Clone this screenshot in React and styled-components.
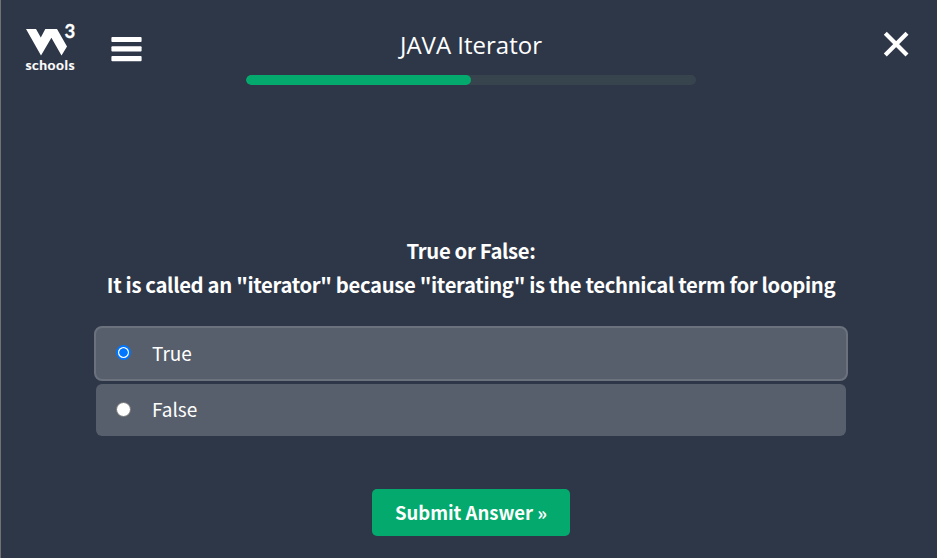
import React, { useState } from "react";
import styled, { createGlobalStyle } from "styled-components";

const GlobalStyle = createGlobalStyle`
  *, *::before, *::after { box-sizing: border-box; }
  body { margin: 0; background: #2e3748; overflow: hidden; }
`;

const Page = styled.div`
  height: 558px;
  border-left: 1px solid #73726f;
  background: #2e3748;
  color: #fff;
  font-family: "Noto Sans CJK SC", "Open Sans", sans-serif;
  display: flex;
  flex-direction: column;
`;

const Header = styled.header`
  height: 90px;
  flex: none;
  display: grid;
  grid-template-columns: 245px 450px 1fr;
`;

const Left = styled.div`
  display: flex;
  align-items: flex-start;
  padding: 20px 0 0 20px;
`;

const Logo = styled.svg`
  display: block;
  flex: none;
  font-family: "Lato", sans-serif;
  font-weight: 700;
  fill: #fff;
`;

const IconButton = styled.button`
  border: 0;
  padding: 0;
  background: none;
  color: #fff;
  cursor: pointer;
  line-height: 0;
  margin: ${(p) => p.$margin};
`;

const Center = styled.div`
  display: flex;
  flex-direction: column;
  align-items: center;
  padding-top: 29px;
`;

const Title = styled.h1`
  margin: 0;
  height: 46px;
  font: 400 24px/32px "Open Sans", sans-serif;
  white-space: nowrap;
`;

const Track = styled.div`
  width: 450px;
  height: 10px;
  border-radius: 5px;
  background: #38444d;
  overflow: hidden;
`;

const Fill = styled.div`
  height: 100%;
  border-radius: 5px;
  background: #04aa6d;
`;

const Right = styled.div`
  display: flex;
  justify-content: flex-end;
  align-items: flex-start;
`;

const Quiz = styled.form`
  width: 754px;
  margin: 143px 0 0 93px;
  display: flex;
  flex-direction: column;
  align-items: center;
`;

const Question = styled.p`
  margin: 0;
  height: 93px;
  text-align: center;
  font-size: 20.3px;
  font-weight: 700;
  line-height: 34px;
  letter-spacing: -0.345px;
  white-space: nowrap;
`;

const Option = styled.label`
  display: flex;
  align-items: center;
  width: ${(p) => (p.$checked ? 754 : 750)}px;
  height: ${(p) => (p.$checked ? 55 : 52)}px;
  margin-bottom: ${(p) => (p.$checked ? 3 : 0)}px;
  padding: 0 20px 2px;
  border: ${(p) => (p.$checked ? "2px solid #6b727e" : "0")};
  border-radius: ${(p) => (p.$checked ? 8 : 6)}px;
  background: #585f6c;
  font-size: 19px;
  line-height: 28px;
  cursor: pointer;
`;

const Radio = styled.input`
  appearance: none;
  flex: none;
  width: 15px;
  height: 15px;
  margin: 1px 21px 1px 0;
  border-radius: 50%;
  border: 1px solid #767676;
  background: #fff;

  &:checked {
    margin: 0 21px 1px 0;
    border: 2px solid #0075ff;
    background: radial-gradient(circle, #0075ff 3.9px, #fff 4.6px);
    background-origin: border-box;
  }
`;

const Submit = styled.button`
  width: 198px;
  height: 47px;
  margin-top: 53px;
  padding: 0;
  border: 0;
  border-radius: 5px;
  background: #04aa6d;
  color: #fff;
  font: 700 18.5px/47px "Noto Sans CJK SC", sans-serif;
  white-space: nowrap;
  cursor: pointer;
`;

const answers = ["True", "False"];

export default function App() {
  const [selected, setSelected] = useState("True");
  return (
    <>
      <GlobalStyle />
      <Page>
        <Header>
          <Left>
            <Logo width="60" height="54" viewBox="21 20 60 54" aria-label="W3Schools">
              <path d="M26 29H36L40.8 37.5L45.3 29H57L67 46.5L61.5 55.5L51.4 37.8L41 55.5Z" />
              <text x="64.5" y="37.9" fontSize="18.5" stroke="#fff" strokeWidth="0.3">3</text>
              <text x="25.5" y="70" fontSize="13.8" textLength="49" stroke="#fff" strokeWidth="0.2">schools</text>
            </Logo>
            <IconButton type="button" aria-label="Menu" $margin="16px 0 0 30px">
              <svg width="31" height="26" viewBox="0 0 31 26" fill="currentColor">
                <rect x="0.4" y="1" width="30.2" height="5" rx="1" />
                <rect x="0.4" y="10.3" width="30.2" height="5.2" rx="1" />
                <rect x="0.4" y="20" width="30.2" height="5.3" rx="1" />
              </svg>
            </IconButton>
          </Left>
          <Center>
            <Title>JAVA Iterator</Title>
            <Track>
              <Fill style={{ width: "50%" }} />
            </Track>
          </Center>
          <Right>
            <IconButton type="button" aria-label="Close" $margin="31px 28px 0 0">
              <svg width="26" height="26" viewBox="0 0 26 26" stroke="currentColor" strokeWidth="4.2">
                <path d="M2.3 2.3L24 24M24 2.3L2.3 24" />
              </svg>
            </IconButton>
          </Right>
        </Header>
        <Quiz>
          <Question>
            True or False:
            <br />
            It is called an "iterator" because "iterating" is the technical term for looping
          </Question>
          {answers.map((answer) => (
            <Option key={answer} $checked={selected === answer}>
              <Radio
                type="radio"
                name="answer"
                checked={selected === answer}
                onChange={() => setSelected(answer)}
              />
              {answer}
            </Option>
          ))}
          <Submit type="button">Submit Answer »</Submit>
        </Quiz>
      </Page>
    </>
  );
}
